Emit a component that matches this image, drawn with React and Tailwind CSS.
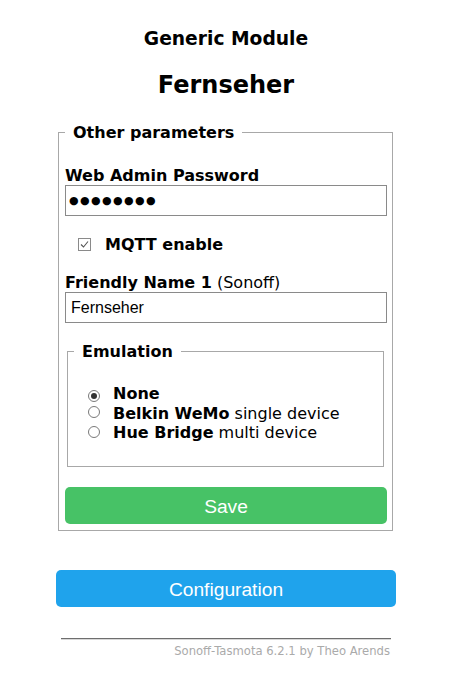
import React from "react";

function Check() {
  return (
    <span className="inline-flex w-[13px] h-[13px] border border-[#8a8a8a] bg-white items-center justify-center">
      <svg width="9" height="9" viewBox="0 0 9 9">
        <path d="M1 4.5 L3.5 7 L8 1.5" fill="none" stroke="#555" strokeWidth="1.1" />
      </svg>
    </span>
  );
}

function Radio({ on }) {
  return (
    <span className="inline-flex w-[12px] h-[12px] rounded-full border border-[#7a7a7a] bg-white items-center justify-center">
      {on && <span className="block w-[6px] h-[6px] rounded-full bg-[#333]" />}
    </span>
  );
}

export default function App() {
  return (
    <div className="min-h-[696px] bg-white text-black font-['DejaVu_Sans',Verdana,sans-serif] text-[16px]">
      <div className="ml-[56px] w-[340px]">
        <div className="pt-[28px] h-[50px] leading-[22px] text-[18.7px] font-bold text-center">Generic Module</div>
        <div className="mt-[21px] h-[28px] leading-[28px] text-[24px] font-bold text-center">Fernseher</div>

        <fieldset className="mt-[22px] ml-[2px] w-[335px] border border-[#a8a8a8] pl-[6px] pr-[5px] pb-[6px]">
          <legend className="px-[8px] pt-[2px] leading-[20px] font-bold">Other parameters</legend>
          <div className="mt-[23px] h-[19px] leading-[20px] font-bold">Web Admin Password</div>
          <div className="h-[31px] border border-[#8a8a8a] flex items-center pl-[3px] text-[11px] tracking-[1.4px] leading-none">
            ●●●●●●●●
          </div>
          <div className="mt-[18px] h-[20px] flex items-center">
            <span className="ml-[13px]"><Check /></span>
            <span className="ml-[14px] font-bold leading-[20px] pt-[1px]">MQTT enable</span>
          </div>
          <div className="mt-[19px] h-[19px] leading-[20px]">
            <b>Friendly Name 1</b> (Sonoff)
          </div>
          <div className="h-[31px] border border-[#8a8a8a] flex items-center pl-[5px] font-['Liberation_Sans',Arial,sans-serif] text-[16px]">
            Fernseher
          </div>

          <fieldset className="mt-[17px] ml-[2px] w-[317px] border border-[#a8a8a8] pl-[6px] pb-[23px]">
            <legend className="px-[8px] pt-[2px] leading-[20px] font-bold">Emulation</legend>
            <div className="mt-[22px]">
              <div className="h-[19.5px] flex items-center">
                <span className="ml-[14px]"><Radio on /></span>
                <span className="ml-[13px] font-bold pt-[1px]">None</span>
              </div>
              <div className="h-[19.5px] flex items-center">
                <span className="ml-[14px]"><Radio /></span>
                <span className="ml-[13px] pt-[1px]"><b>Belkin WeMo</b> single device</span>
              </div>
              <div className="h-[19.5px] flex items-center">
                <span className="ml-[14px]"><Radio /></span>
                <span className="ml-[13px] pt-[1px]"><b>Hue Bridge</b> multi device</span>
              </div>
            </div>
          </fieldset>

          <button className="mt-[20px] w-full h-[37px] pt-[4px] rounded-[5px] bg-[#47c266] text-white text-[19.2px] font-['Liberation_Sans',Arial,sans-serif] flex items-center justify-center">
            Save
          </button>
        </fieldset>

        <button className="mt-[39px] w-[340px] h-[37px] pt-[4px] rounded-[5px] bg-[#1fa3ec] text-white text-[19.2px] font-['Liberation_Sans',Arial,sans-serif] flex items-center justify-center">
          Configuration
        </button>

        <div className="mt-[31px] ml-[5px] w-[330px] border-t border-t-[#6e6e6e] border-b border-b-[#d8d8d8]" />
        <div className="mt-[5px] w-[334px] text-right text-[11.6px] leading-[13px] text-[#aaaaaa]">
          Sonoff-Tasmota 6.2.1 by Theo Arends
        </div>
      </div>
    </div>
  );
}
